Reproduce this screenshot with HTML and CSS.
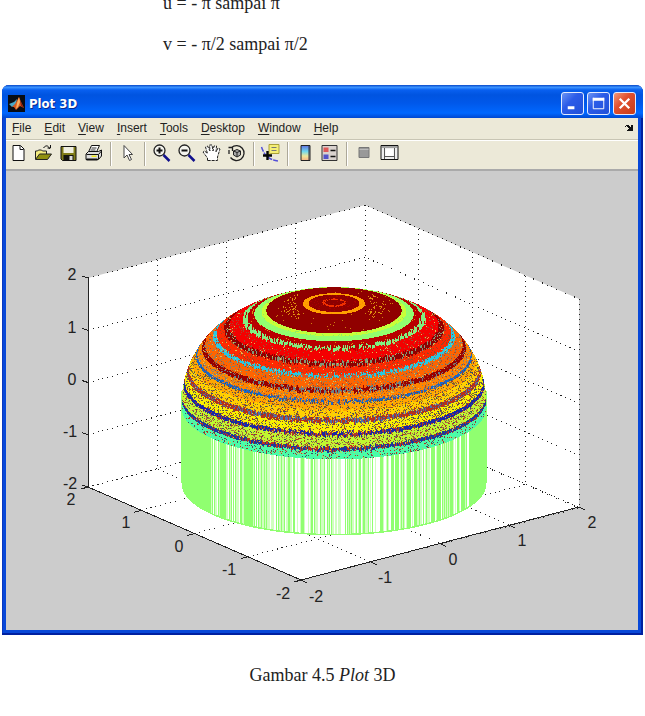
FILE: index.html
```html
<!DOCTYPE html>
<html lang="id">
<head>
<meta charset="utf-8">
<meta name="viewport" content="width=device-width, initial-scale=1">
<title>Plot 3D</title>
<link rel="stylesheet" href="styles.css">
</head>
<body>
<div class="equations">
  <p>u = - π sampai π</p>
  <p>v = - π/2 sampai π/2</p>
</div>

<figure class="figure">
  <section class="window">
    <header class="titlebar">
      <svg class="logo" viewBox="0 0 17 17" aria-hidden="true">
        <rect width="17" height="17" fill="#080c14"/>
        <path d="M1 9L6 7L9 4L8 9L4 12Z" fill="#4aa8c8"/>
        <path d="M4 12L7 9L11 2L13 7L16 13L12 11L8 15L6 12Z" fill="#d85a20"/>
        <path d="M11 2L12 7L10 12L8 14L9 8Z" fill="#f8b060"/>
        <path d="M12 5L16 13L13 11Z" fill="#8c2010"/>
      </svg>
      <h1>Plot 3D</h1>
      <div class="controls">
        <button type="button" class="control" aria-label="Minimize"><svg viewBox="0 0 22 22"><path d="M6 15.5H13" stroke="#fff" stroke-width="3"/></svg></button>
        <button type="button" class="control" aria-label="Maximize"><svg viewBox="0 0 22 22"><path d="M5.5 5V16.5H16.5V5" fill="none" stroke="#fff"/><path d="M5 6.5H17" stroke="#fff" stroke-width="3"/></svg></button>
        <button type="button" class="control close" aria-label="Close"><svg viewBox="0 0 22 22"><path d="M6 6L16 16M16 6L6 16" stroke="#fff" stroke-width="2.4"/></svg></button>
      </div>
    </header>

    <nav class="menubar">
      <button type="button"><u>F</u>ile</button>
      <button type="button"><u>E</u>dit</button>
      <button type="button"><u>V</u>iew</button>
      <button type="button"><u>I</u>nsert</button>
      <button type="button"><u>T</u>ools</button>
      <button type="button"><u>D</u>esktop</button>
      <button type="button"><u>W</u>indow</button>
      <button type="button"><u>H</u>elp</button>
      <button type="button" class="dock" aria-label="Dock figure"><svg viewBox="0 0 8 7"><path d="M0 3V2H1V1H4V2H5V3H6V1H8V7H2V6H3V5H4V4H3V3H2V2H1V3Z" fill="#111"/></svg></button>
    </nav>

    <div class="toolbar">
      <button type="button" aria-label="New figure"><svg viewBox="0 0 20 20"><path d="M4.5 2.5H12L15.500 6V17.500H4.500Z" fill="#fff" stroke="#111"/><path d="M11.500 3V6.500H15" fill="none" stroke="#111"/></svg></button>
      <button type="button" aria-label="Open file"><svg viewBox="0 0 20 20"><path d="M2 16V8H4L5 7H8L9 8H13V11" fill="#f4ec80" stroke="#222"/><path d="M2 16.500L6 11H18L14 16.500Z" fill="#909010" stroke="#222"/><path d="M10 5C12 2 15 2 16 6M14 5H17V2" fill="none" stroke="#111"/></svg></button>
      <button type="button" aria-label="Save figure"><svg viewBox="0 0 20 20"><path d="M2.500 3.500H17.500V17.500H4L2.500 16Z" fill="#807c18" stroke="#111"/><path d="M5 4H15V10H5Z" fill="#efeee0"/><path d="M5 12H15V17H5Z" fill="#151510"/><path d="M11 13H14V17H11Z" fill="#ddd"/></svg></button>
      <button type="button" aria-label="Print figure"><svg viewBox="0 0 20 20"><path d="M5 9L8 2.500H16L13 9" fill="#fff" stroke="#111"/><path d="M8 5H13M7 7H12" stroke="#333"/><path d="M2.500 11L5 8.500H15L18 7V13L15 16.500H2.500Z" fill="#ddd" stroke="#111"/><path d="M3 11.500H15V16M15 11.500L18 8" fill="none" stroke="#111"/><path d="M8 12.500H13V14H8Z" fill="#f0e820"/><path d="M3 16.500H14" stroke="#111" stroke-width="2"/></svg></button>
      <span class="separator"></span>
      <button type="button" aria-label="Edit plot"><svg viewBox="0 0 20 20"><path d="M6.500 2.500V15L9.500 12L12 17.500L14 16.500L11.500 11.500H15Z" fill="#fff" stroke="#444"/></svg></button>
      <span class="separator"></span>
      <button type="button" aria-label="Zoom in"><svg viewBox="0 0 20 20"><circle cx="8" cy="7.500" r="5.500" fill="#f4f4ee" stroke="#222" stroke-width="1.300"/><path d="M5 7.500H11M8 4.500V10.500" stroke="#111" stroke-width="2"/><path d="M12 12L18 18" stroke="#10108c" stroke-width="2.500"/></svg></button>
      <button type="button" aria-label="Zoom out"><svg viewBox="0 0 20 20"><circle cx="8" cy="7.500" r="5.500" fill="#f4f4ee" stroke="#222" stroke-width="1.300"/><path d="M5 7.500H11" stroke="#111" stroke-width="2"/><path d="M12 12L18 18" stroke="#10108c" stroke-width="2.500"/></svg></button>
      <button type="button" aria-label="Pan"><svg viewBox="0 0 20 20"><path d="M6 17.500V15L1.500 9L3 8L6 10.500L4 4L6 3L8.500 8L8 2H10.500L11.500 8L12.500 3H15L14.500 9L16.500 5L18.500 6L16 14V17.500Z" fill="#fff" stroke="#222" stroke-dasharray="3 1"/></svg></button>
      <button type="button" aria-label="Rotate 3D"><svg viewBox="0 0 20 20"><path d="M5 4.500A7.500 7.500 0 1 1 4 14.500M2.500 11V7M2 4.500H6V8" fill="none" stroke="#222" stroke-width="1.300"/><path d="M7 8L10.500 6.500L14 8V12L10.500 14L7 12ZM7 8L10.500 9.500V14M10.500 9.500L14 8" fill="#aaa" stroke="#222"/></svg></button>
      <span class="separator"></span>
      <button type="button" aria-label="Data cursor"><svg viewBox="0 0 20 20"><path d="M1 4C4 13 9 17 18 18" fill="none" stroke="#5450d8" stroke-width="1.500" stroke-dasharray="5 1"/><path d="M8.500 1.500H18.500V10.500H10L8 13L8.500 10Z" fill="#f5ef75" stroke="#aaa138"/><path d="M11 4.500H16M11 7.500H16" stroke="#777"/><path d="M7 8V17M2.500 12.500H11.500" stroke="#050505" stroke-width="2.400"/></svg></button>
      <span class="separator"></span>
      <button type="button" aria-label="Insert colorbar"><svg viewBox="0 0 20 20"><defs><linearGradient id="colorbar" x2="0" y2="1"><stop stop-color="#6070e0"/><stop offset=".4" stop-color="#70d8ed"/><stop offset=".7" stop-color="#eee89a"/><stop offset="1" stop-color="#f6b184"/></linearGradient></defs><path d="M6.500 2.500H15.500V17.500H6.500Z" fill="url(#colorbar)" stroke="#222"/><path d="M14.500 3V17" stroke="#334"/></svg></button>
      <button type="button" aria-label="Insert legend"><svg viewBox="0 0 20 20"><path d="M2.500 2.500H17.500V17.500H2.500Z" fill="#d9d2ce" stroke="#333"/><path d="M4 4.500H9V9H4Z" fill="#df5959"/><path d="M4 11.500H9V16H4Z" fill="#5353c9"/><path d="M11 7.500H16M11 13.500H16" stroke="#111" stroke-width="1.500"/></svg></button>
      <span class="separator"></span>
      <button type="button" aria-label="Hide plot tools"><svg viewBox="0 0 20 20"><path d="M5.500 4.500H15.500V14.500H5.500Z" fill="#999" stroke="#777"/><path d="M6 6.500H15" stroke="#bbb"/></svg></button>
      <button type="button" aria-label="Show plot tools"><svg viewBox="0 0 20 20"><path d="M2.500 2.500H19.500V16.500H2.500Z" fill="#eee" stroke="#111"/><path d="M3 4H19M6 5V16M16 5V16M6 13.500H16" stroke="#555"/><path d="M7 6H15V13H7Z" fill="#fff"/></svg></button>
    </div>

    <div class="plot">
      <svg class="axes" viewBox="6 171 632 459" role="img" aria-label="Sumbu plot 3D">
        <path d="M88 278L365 205L579 299V507L301 580L88 487Z" fill="#fff"/>
        <g id="grid" class="grid"></g>
        <path class="axis" d="M88 278V487L301 580L579 507"/>
        <g id="ticks" class="axis"></g>
        <g class="labels">
          <text x="72" y="280">2</text><text x="72" y="333">1</text><text x="72" y="385">0</text><text x="70" y="437">-1</text><text x="70" y="489">-2</text>
          <text x="71" y="505">2</text><text x="126" y="528">1</text><text x="179" y="552">0</text><text x="229" y="575">-1</text><text x="283" y="599">-2</text>
          <text x="316" y="602">-2</text><text x="385" y="583">-1</text><text x="453" y="565">0</text><text x="522" y="546">1</text><text x="592" y="528">2</text>
        </g>
      </svg>
      <canvas id="surface" class="surface" width="632" height="459"></canvas>
    </div>
  </section>
  <figcaption>Gambar 4.5 <i>Plot</i> 3D</figcaption>
</figure>
<script src="plot.js"></script>
</body>
</html>
```
FILE: styles.css
```css
* {
  box-sizing: border-box;
}

body {
  margin: 0;
  background: #fff;
  color: #222;
  font-family: "Liberation Serif", serif;
  font-size: 18px;
  overflow-x: hidden;
}

.equations {
  margin-top: -17px;
  padding-left: 163px;
}

.equations p {
  margin: 0;
  line-height: 41px;
}

.figure {
  margin: 20px 2px 0;
}

.window {
  padding: 0 5px 5px 4px;
  border-radius: 7px 7px 0 0;
  background: #0848d8;
  box-shadow: inset -2px -2px #0020a0, inset 1px 0 #0838c0;
  overflow: hidden;
  font-family: "Liberation Sans", sans-serif;
}

.titlebar {
  display: flex;
  align-items: center;
  gap: 4px;
  height: 33px;
  margin: 0 -5px 0 -4px;
  padding: 3px 7px 0 6px;
  background: linear-gradient(#0848c8, #3c94ff 7%, #0860f0 15%, #0054e0 30%, #0058ea 55%, #0068ff 85%, #0048d0);
}

.logo {
  width: 17px;
  height: 17px;
}

.titlebar h1 {
  flex: 1;
  margin: 0;
  color: #fff;
  font: bold 13px "DejaVu Sans Condensed", "DejaVu Sans", sans-serif;
  text-shadow: 1px 1px #0a2c90;
}

.controls {
  display: flex;
  gap: 3px;
}

button {
  display: block;
  margin: 0;
  padding: 0;
  border: 0;
  background: none;
  color: #222;
  font: inherit;
}

button svg {
  display: block;
  width: 100%;
  height: 100%;
}

.control {
  width: 23px;
  height: 23px;
  border: 1px solid #e4ecff;
  border-radius: 3px;
  background: linear-gradient(135deg, #6c94f4, #2c5ce8 40%, #2050d8);
}

.close {
  background: linear-gradient(135deg, #f09878, #e05030 40%, #c83c18);
}

.menubar {
  display: flex;
  align-items: center;
  gap: 13px;
  height: 22px;
  padding: 0 5px 2px 6px;
  border-bottom: 1px solid #c8c5b4;
  background: #ece9d8;
  font-size: 12px;
}

.menubar u {
  text-underline-offset: 2px;
}

.menubar .dock {
  width: 8px;
  height: 7px;
  margin-left: auto;
}

.toolbar {
  display: flex;
  align-items: center;
  height: 31px;
  padding-bottom: 2px;
  border-top: 1px solid #fff;
  border-bottom: 2px solid #aaa;
  background: #ece9d8;
}

.toolbar button {
  width: 25px;
  height: 24px;
  padding: 1px 2px 3px;
}

.separator {
  width: 9px;
  height: 24px;
  background: linear-gradient(90deg, #aca899 50%, #fff 50%) center / 2px 100% no-repeat;
}

.plot {
  display: grid;
  background: #ccc;
}

.axes,
.surface {
  display: block;
  grid-area: 1 / 1;
  width: 100%;
  height: auto;
}

.grid {
  fill: none;
  stroke: #222;
  stroke-dasharray: 1 4;
  shape-rendering: crispEdges;
}

.axis {
  fill: none;
  stroke: #222;
  shape-rendering: crispEdges;
}

.labels {
  fill: #222;
  font-size: 16px;
  text-anchor: middle;
}

figcaption {
  margin-top: 30px;
  text-align: center;
  line-height: 20px;
}
```
FILE: plot.js
```js
const path = (group, d) => {
  const node = document.createElementNS("http://www.w3.org/2000/svg", "path");
  node.setAttribute("d", d);
  document.getElementById(group).append(node);
};

// Grid lines on the two walls and the floor, and a tick for each axis value.
for (let i = 0; i <= 4; i++) {
  const z = 52.25 * i;
  path("grid", `M88 ${278 + z}L365 ${205 + z}L579 ${299 + z}`);
  path("grid", `M${88 + 69.25 * i} ${278 - 18.25 * i}v209L${301 + 69.5 * i} ${580 - 18.25 * i}`);
  path("grid", `M${365 + 53.5 * i} ${205 + 23.5 * i}v209L${88 + 53.25 * i} ${487 + 23.25 * i}`);
  path("ticks", `M88 ${278 + z}l-6 -2`);
  path("ticks", `M${88 + 53.25 * i} ${487 + 23.25 * i}l-7 2`);
  path("ticks", `M${301 + 69.5 * i} ${580 - 18.25 * i}l6 3`);
}

const canvas = document.getElementById("surface");
const ctx = canvas.getContext("2d");
const image = ctx.createImageData(canvas.width, canvas.height);
const CX = 333.5, RX = 152.5, FLAT = 0.34, BASE = 407, HEIGHT = 105, POWER = 2.25;

const noise = (x, y) => {
  let n = Math.imul(x + 71, 374761393) + Math.imul(y + 13, 668265263);
  n = Math.imul(n ^ (n >>> 13), 1274126177);
  return ((n ^ (n >>> 16)) >>> 0) / 4294967296;
};

// Each band: front depth where it ends, base colour, second colour,
// share of the second colour at the sides and at the centre.
const bands = [
  [305, "8c0000", "a80000", .1, .1],
  [306.500, "f03000", "8c0000", .3, .3],
  [311.500, "900000", "a80000", .1, .1],
  [314, "ffa000", "ff9000", .1, .1],
  [333, "900000", "d08010", .01, .01],
  [336, "c8ff38", "90f060", .1, .1],
  [341, "90ff70", "a0ff60", .1, .1],
  [346, "b80000", "e09010", .03, .04],
  [350, "80f080", "b80000", .05, .45],
  [361, "f40000", "9c5030", .12, .02],
  [366, "900000", "809878", .12, .5],
  [374, "ff2800", "a04020", .15, .05],
  [378, "28c8e0", "e05020", .05, .48],
  [388, "ff6400", "858068", .18, .12],
  [393, "980000", "688088", .1, .6],
  [400, "ff8500", "888070", .18, .1],
  [403, "1868c8", "d87820", .1, .45],
  [410, "ffa600", "807030", .16, .08],
  [418, "ffd000", "987028", .2, .1],
  [423, "b83018", "5070a8", .3, .5],
  [432, "f8f000", "706040", .2, .08],
  [436, "1828a8", "b03828", .1, .5],
  [447, "c0f830", "a07040", .22, .12],
  [451, "1838a0", "c03020", .2, .55],
  [462, "48ffa8", "60e8a0", .25, .1]
];

const put = (x, y, hex) => {
  const at = (y * canvas.width + x) * 4, value = parseInt(hex, 16);
  image.data[at] = value >> 16;
  image.data[at + 1] = (value >> 8) & 255;
  image.data[at + 2] = value & 255;
  image.data[at + 3] = 255;
};

// Rings from the rim to the apex, with the depth of the front of each.
const rings = [];
for (let i = 0; i <= 400; i++) {
  const t = i / 400 * Math.PI / 2;
  const r = RX * Math.max(0, Math.cos(t)) ** (2 / POWER);
  const cy = BASE - HEIGHT * Math.sin(t) ** (2 / POWER);
  rings.push({ r, cy, front: cy + r * FLAT });
}

for (let py = 0; py < canvas.height; py++) {
  for (let px = 0; px < canvas.width; px++) {
    const x = px + 6, y = py + 171, dx = x - CX;
    if (Math.abs(dx) > RX) continue;
    const side = Math.abs(dx) / RX;
    const arc = RX * FLAT * Math.sqrt(1 - side * side);

    if (y > BASE - 17 && y < 483 + arc) {
      const gap = noise(x, 900);
      const open = side < .84 ? .78 - side * .45 : side < .92 ? .12 : 0;
      const rim = y > 481.500 + arc;
      put(px, py, rim || gap >= open ? "90ff70" : gap < open * .45 ? "ffffff" : "d0ffc0");
    }

    let hit = null;
    for (let i = rings.length - 1; i >= 0; i--) {
      const ring = rings[i];
      const v = (y - ring.cy) / FLAT;
      if (dx * dx + v * v <= ring.r * ring.r) { hit = ring; break; }
    }
    if (!hit) continue;

    const streak = side < .75 ? (noise(x, Math.floor(y / 6)) - .5) * 4 * (1 - side) : 0;
    const depth = hit.front + (hit.front > 345 ? streak : 0);
    const band = bands.find(b => depth < b[0]) || bands[bands.length - 1];
    const weight = Math.max(0, 1 - side * 1.25);
    const share = band[3] + (band[4] - band[3]) * weight;
    const pick = weight > .2 && band[4] > .3 ? noise(x, Math.floor(y / 3)) : noise(x, y);
    let colour = pick < share ? band[2] : band[1];
    const speck = noise(x + 500, y);
    if (depth > 366 && speck < .07) colour = depth > 400 ? "b03820" : "b04820";
    if (depth > 400 && speck > .94) colour = "405060";
    if (depth > 345 && speck > .5 && speck < .53) colour = "e0c050";
    const orbit = Math.abs(hit.r - 45);
    if (orbit < 7 && side > .22 && speck < .2) colour = "e09010";
    put(px, py, colour);
  }
}
ctx.putImageData(image, 0, 0);
```
